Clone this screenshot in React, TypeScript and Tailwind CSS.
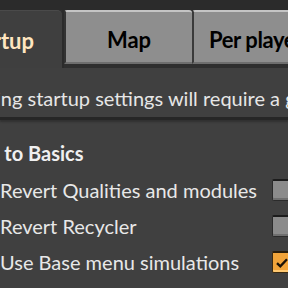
import React from "react";

const font = { fontFamily: "Lato, 'Open Sans', sans-serif" };

const Checkbox = ({ checked }: { checked?: boolean }) => {
  if (checked) {
    return (
      <div className="w-[22px] h-[22px] shrink-0 rounded-[2px] border border-[#3a2a10] border-t-2 border-t-[#2a1e0c] bg-[#f1a43a] shadow-[inset_0_-2px_0_#ffc870] flex items-center pl-[3px]">
        <svg width="12" height="10" viewBox="0 0 12 10">
          <path d="M1 5.2 L4.3 8.3 L11 1.2" fill="none" stroke="#1a1208" strokeWidth="2.4" />
        </svg>
      </div>
    );
  }
  return (
    <div className="w-[22px] h-[22px] shrink-0 rounded-[2px] border border-[#2b2b2b] border-t-2 border-t-[#1c1c1c] bg-[#8b8b8b] shadow-[inset_0_-2px_0_#6f6f6f]" />
  );
};

const Row = ({ label, checked }: { label: string; checked?: boolean }) => (
  <div className="w-[294px] h-[36px] flex items-center justify-between">
    <span className="text-[20px] leading-[24px] text-[#e8e8e8] whitespace-nowrap">{label}</span>
    <Checkbox checked={checked} />
  </div>
);

export default function App() {
  return (
    <div className="w-[288px] h-[288px] overflow-hidden bg-[#404040]" style={font}>
      <div className="h-[10px] bg-[#2b2b2b]" />
      <div className="h-[58px] flex bg-[#2f2f2f] whitespace-nowrap">
        <div className="w-[62px] shrink-0 h-full bg-[#3f3f3f] rounded-tr-[5px] border-t border-[#4a4a4a] flex justify-end pr-[28px] pt-[17px]">
          <span className="text-[22px] leading-[26px] font-bold text-[#ffe6c0]">Startup</span>
        </div>
        <div className="w-[2px] shrink-0 bg-[#2b2b2b]" />
        <div className="w-[128px] shrink-0 h-[54px] bg-[#8e8e8e] rounded-t-[3px] border-t-2 border-t-[#c4c4c4] border-l-2 border-l-[#333] border-b-2 border-b-[#6e6e6e] flex justify-center pt-[15px]">
          <span className="text-[22px] leading-[26px] font-bold text-black">Map</span>
        </div>
        <div className="w-[134px] shrink-0 h-[54px] bg-[#8e8e8e] rounded-t-[3px] border-t-2 border-t-[#c4c4c4] border-l-2 border-l-[#3a3a3a] border-b-2 border-b-[#6e6e6e] flex justify-start pl-[15px] pt-[15px]">
          <span className="text-[22px] leading-[26px] font-bold text-black tracking-[-0.4px]">Per player</span>
        </div>
      </div>
      <div className="pt-[18px] whitespace-nowrap">
        <div className="-ml-[60px] text-[20px] leading-[24px] text-[#e6e6e6]">
          Changing startup settings will require a game restart.
        </div>
      </div>
      <div className="mt-[7px] h-[3px] bg-[#262626] shadow-[0_2px_2px_#303030]" />
      <div className="pt-[21px] whitespace-nowrap">
        <div className="-ml-[44px] text-[20px] leading-[24px] font-bold text-[#f0f0f0]">Back to Basics</div>
      </div>
      <div className="mt-[7px] flex flex-col">
        <Row label="Revert Qualities and modules" />
        <Row label="Revert Recycler" />
        <Row label="Use Base menu simulations" checked />
      </div>
    </div>
  );
}
